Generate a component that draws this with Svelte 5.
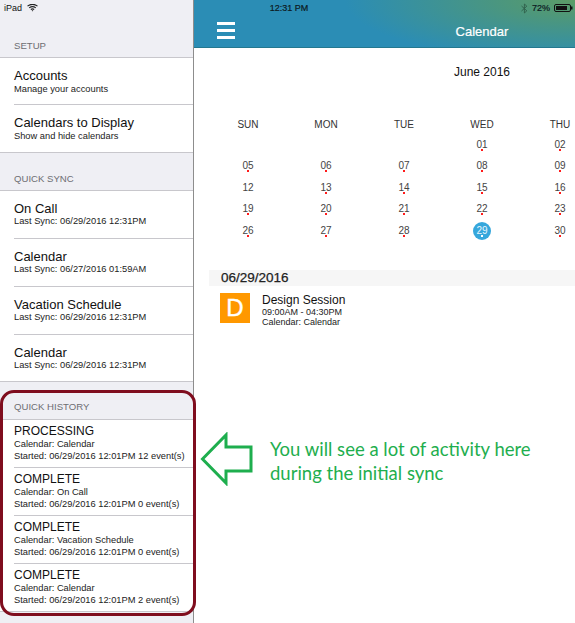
<script lang="ts">
  const setup = [
    { title: 'Accounts', sub: 'Manage your accounts' },
    { title: 'Calendars to Display', sub: 'Show and hide calendars' }
  ];
  const sync = [
    { title: 'On Call', sub: 'Last Sync: 06/29/2016 12:31PM' },
    { title: 'Calendar', sub: 'Last Sync: 06/27/2016 01:59AM' },
    { title: 'Vacation Schedule', sub: 'Last Sync: 06/29/2016 12:31PM' },
    { title: 'Calendar', sub: 'Last Sync: 06/29/2016 12:31PM' }
  ];
  const history = [
    { title: 'PROCESSING', cal: 'Calendar: Calendar', sub: 'Started: 06/29/2016 12:01PM 12 event(s)' },
    { title: 'COMPLETE', cal: 'Calendar: On Call', sub: 'Started: 06/29/2016 12:01PM 0 event(s)' },
    { title: 'COMPLETE', cal: 'Calendar: Vacation Schedule', sub: 'Started: 06/29/2016 12:01PM 0 event(s)' },
    { title: 'COMPLETE', cal: 'Calendar: Calendar', sub: 'Started: 06/29/2016 12:01PM 2 event(s)' }
  ];
  // only the columns that fit in the window
  const days = ['SUN', 'MON', 'TUE', 'WED', 'THU'];
  const weeks = [
    ['', '', '', '01', '02'],
    ['05', '06', '07', '08', '09'],
    ['12', '13', '14', '15', '16'],
    ['19', '20', '21', '22', '23'],
    ['26', '27', '28', '29', '30']
  ];
</script>

<div class="page">
  <aside class="side">
    <div class="status-left">
      <span>iPad</span>
      <svg width="11" height="8" viewBox="0 0 11 8"><path d="M0.5 2.2C3.4-.3 7.6-.3 10.5 2.2M2.2 3.9C4.1 2.4 6.9 2.4 8.8 3.9M3.8 5.5C4.8 4.8 6.2 4.8 7.2 5.5" fill="none" stroke="#222" stroke-width="1.1"/><path d="M4.6 6.3L5.5 7.5L6.4 6.3Z" fill="#222"/></svg>
    </div>

    <div class="group-head first">SETUP</div>
    <div class="group">
      {#each setup as row}
        <div class="row short">
          <div class="title">{row.title}</div>
          <div class="sub">{row.sub}</div>
        </div>
      {/each}
    </div>

    <div class="group-head">QUICK SYNC</div>
    <div class="group sync">
      {#each sync as row}
        <div class="row">
          <div class="title">{row.title}</div>
          <div class="sub">{row.sub}</div>
        </div>
      {/each}
    </div>

    <div class="group-head last">QUICK HISTORY</div>
    <div class="group">
      {#each history as row}
        <div class="row hist">
          <div class="title">{row.title}</div>
          <div class="sub">{row.cal}</div>
          <div class="sub">{row.sub}</div>
        </div>
      {/each}
    </div>
  </aside>

  <main class="main">
    <header class="bar">
      <div class="status">
        <span class="clock">12:31 PM</span>
        <div class="status-right">
          <svg width="7" height="11" viewBox="0 0 7 11"><path d="M0.5 3L5.8 7.8L3.4 10V1L5.8 3.2L0.5 8" fill="none" stroke="#2f5f4a" stroke-width="0.9"/></svg>
          <span>72%</span>
          <svg width="19" height="8" viewBox="0 0 19 8"><rect x="0.5" y="0.5" width="16" height="7" rx="1.5" fill="none" stroke="#111"/><rect x="2" y="2" width="11" height="4" fill="#111"/><rect x="17" y="2.5" width="1.5" height="3" fill="#111"/></svg>
        </div>
      </div>
      <div class="nav">
        <div class="burger"><i></i><i></i><i></i></div>
        <div class="nav-title">Calendar</div>
      </div>
    </header>

    <div class="month">June 2016</div>

    <div class="cal">
      <div class="week heads">
        {#each days as d}<div class="head">{d}</div>{/each}
      </div>
      {#each weeks as w}
        <div class="week">
          {#each w as d}
            <div class="cell">
              {#if d}
                <span class="num" class:today={d === '29'}>{d}{#if d !== '12'}<i class="dot"></i>{/if}</span>
              {/if}
            </div>
          {/each}
        </div>
      {/each}
    </div>

    <div class="date-head">06/29/2016</div>
    <div class="event">
      <div class="badge">D</div>
      <div>
        <div class="ev-title">Design Session</div>
        <div class="ev-sub">09:00AM - 04:30PM</div>
        <div class="ev-sub">Calendar: Calendar</div>
      </div>
    </div>
  </main>

  <div class="ring"></div>
  <svg class="arrow" width="54" height="54" viewBox="0 0 54 54">
    <path d="M2.5 27L26 3V15H51V39H26V51Z" fill="#fff" stroke="#1eae4e" stroke-width="3" stroke-linejoin="miter"/>
  </svg>
  <div class="note">You will see a lot of activity here<br />during the initial sync</div>
</div>

<style>
  :global(body) {
    margin: 0;
    background: #fff;
  }

  .page {
    position: relative;
    display: flex;
    width: 575px;
    height: 623px;
    overflow: hidden;
    font-family: "Liberation Sans", Arial, sans-serif;
    color: #111;
  }

  .side {
    flex: 0 0 193px;
    height: 623px;
    background: #efeff4;
    border-right: 1px solid #8d8d8d;
    box-shadow: 1px 0 3px rgba(0, 0, 0, 0.35);
    overflow: hidden;
  }

  .status-left {
    display: flex;
    align-items: center;
    gap: 5px;
    height: 16px;
    padding-left: 4px;
    font-size: 9px;
    color: #111;
  }

  .group-head {
    height: 38px;
    box-sizing: border-box;
    padding: 19px 0 0 14px;
    font-size: 9.6px;
    line-height: 13px;
    color: #6d6d72;
    border-bottom: 1px solid #c8c7cc;
  }

  .group-head.first {
    height: 42px;
    padding-top: 23px;
  }

  .group-head.last {
    padding-top: 18px;
  }

  .group {
    background: #fff;
    border-bottom: 1px solid #c8c7cc;
  }

  .row {
    height: 48px;
    margin-left: 14px;
    padding-top: 10px;
    box-sizing: border-box;
    border-bottom: 1px solid #c8c7cc;
  }

  .row.short,
  .row:last-child {
    height: 47px;
  }

  .row:last-child {
    border-bottom: 0;
  }

  .sync .row:last-child {
    height: 46px;
  }

  .title {
    font-size: 13px;
    line-height: 15px;
    color: #111;
  }

  .sub {
    font-size: 9.3px;
    line-height: 10px;
    color: #222;
    white-space: nowrap;
  }

  .row.short {
    padding-top: 9.5px;
  }

  .short .sub {
    line-height: 13px;
  }

  .row.hist {
    padding-top: 5px;
  }

  .hist .title {
    font-size: 12px;
    line-height: 13px;
  }

  .hist .sub {
    line-height: 12px;
  }

  .main {
    flex: 0 0 576px;
    background: #fff;
  }

  .bar {
    height: 48px;
    background: radial-gradient(ellipse 230px 62px at 381px 0, #5c9c66 0%, #4a9680 35%, #2b8db5 100%);
    border-bottom: 1px solid #24788f;
    box-sizing: border-box;
  }

  .status {
    position: relative;
    height: 16px;
  }

  .clock {
    display: block;
    width: 190px;
    text-align: center;
    font-size: 9px;
    line-height: 16px;
    color: #0c1a22;
    -webkit-text-stroke: 0.2px #0c1a22;
  }

  .status-right {
    position: absolute;
    top: 0;
    left: 327px;
    display: flex;
    align-items: center;
    gap: 4px;
    height: 16px;
    font-size: 9px;
    color: #0c1a22;
    -webkit-text-stroke: 0.2px #0c1a22;
  }

  .nav {
    position: relative;
    display: flex;
    align-items: center;
    justify-content: center;
    height: 31px;
  }

  .burger {
    position: absolute;
    left: 23px;
    top: 6px;
    display: flex;
    flex-direction: column;
    gap: 4px;
  }

  .burger i {
    display: block;
    width: 18px;
    height: 3px;
    background: #fff;
  }

  .nav-title {
    font-size: 13px;
    color: #fff;
    -webkit-text-stroke: 0.2px #fff;
  }

  .month {
    margin-top: 17px;
    text-align: center;
    font-size: 12px;
    line-height: 14px;
    color: #111;
  }

  .cal {
    margin: 39px 0 0 15px;
  }

  .week {
    display: grid;
    grid-template-columns: repeat(7, 78px);
    height: 21.5px;
  }

  .week.heads {
    height: 16px;
  }

  .head {
    text-align: center;
    font-size: 10px;
    line-height: 14px;
    color: #333;
  }

  .cell {
    display: flex;
    justify-content: center;
    align-items: center;
    font-size: 10px;
    color: #444;
  }

  .num {
    position: relative;
    z-index: 0;
    display: block;
    line-height: 12px;
  }

  .num.today {
    color: #e8f6fc;
  }

  .num.today::before {
    content: '';
    position: absolute;
    z-index: -1;
    top: -3px;
    left: -3px;
    width: 18px;
    height: 18px;
    border-radius: 50%;
    background: #36a7dc;
  }

  .dot {
    position: absolute;
    left: 50%;
    bottom: 0;
    width: 2px;
    height: 2px;
    margin-left: -1px;
    background: #ff1a1a;
  }

  .today .dot {
    background: #fff;
  }

  .date-head {
    margin: 28px 0 0 15px;
    height: 16px;
    padding-left: 12px;
    background: #f6f6f6;
    font-size: 13.5px;
    line-height: 16px;
    color: #222;
    -webkit-text-stroke: 0.25px #222;
  }

  .event {
    display: flex;
    gap: 12px;
    margin: 7px 0 0 26px;
  }

  .badge {
    width: 30px;
    height: 30px;
    background: #ff9800;
    color: #fff;
    font-size: 24px;
    line-height: 30px;
    text-align: center;
    -webkit-text-stroke: 0.4px #fff;
  }

  .ev-title {
    font-size: 12px;
    line-height: 14px;
    color: #111;
  }

  .ev-sub {
    font-size: 9px;
    line-height: 10px;
    color: #222;
  }

  .ring {
    position: absolute;
    left: 0;
    top: 390px;
    width: 190px;
    height: 220px;
    border: 3px solid #7f0d1e;
    border-radius: 14px;
  }

  .arrow {
    position: absolute;
    left: 200px;
    top: 432px;
  }

  .note {
    position: absolute;
    left: 270px;
    top: 437px;
    font-family: Lato, sans-serif;
    font-size: 18.5px;
    line-height: 24px;
    color: #1eae4e;
    white-space: nowrap;
  }
</style>
